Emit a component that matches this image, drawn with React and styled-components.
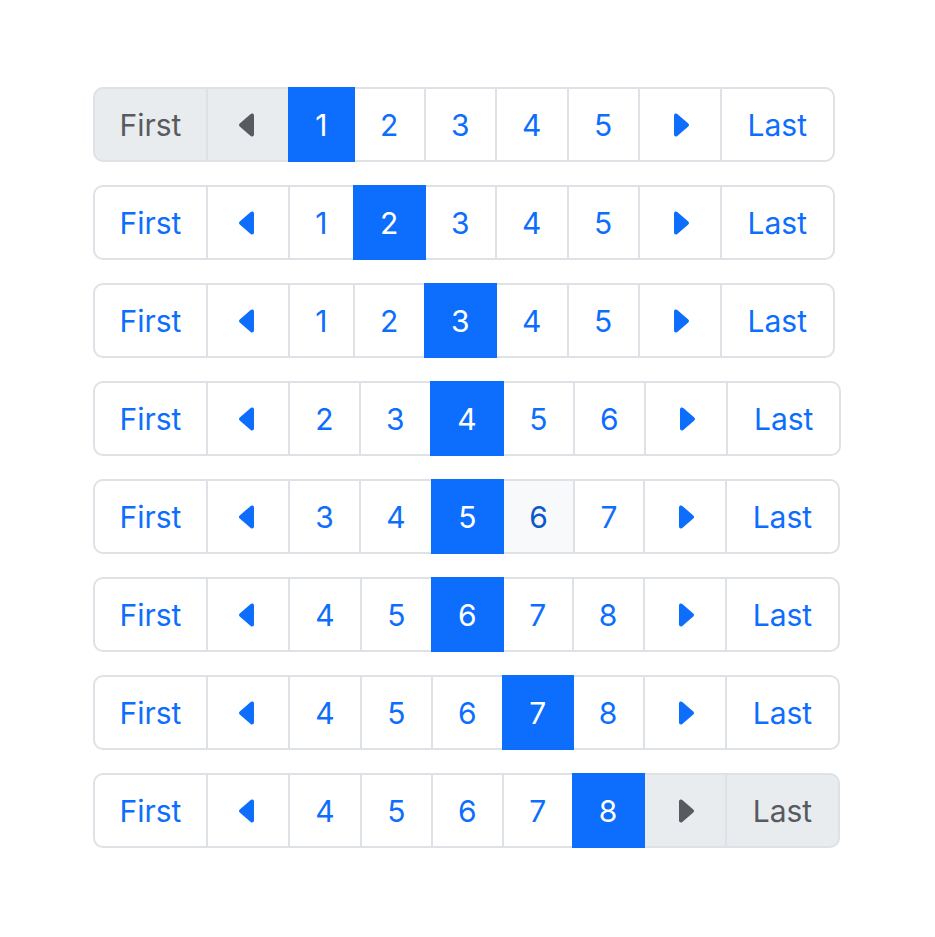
import styled, { createGlobalStyle } from "styled-components";

const GlobalStyle = createGlobalStyle`
  html, body {
    margin: 0;
    padding: 0;
    background: #ffffff;
  }
  body {
    font-family: Inter, "Liberation Sans", sans-serif;
  }
`;

const Page = styled.div`
  padding: 87px 0 0 93px;
  display: flex;
  flex-direction: column;
  align-items: flex-start;
  gap: 23px;
`;

const Pager = styled.ul`
  display: flex;
  list-style: none;
  margin: 0;
  padding: 0;
`;

const Item = styled.li`
  display: flex;
  align-items: center;
  justify-content: center;
  box-sizing: border-box;
  height: 75px;
  padding: 0 ${(p) => p.$pad || 25.3}px;
  margin-left: -2px;
  border: 2px solid #dee2e6;
  font-size: 30px;
  line-height: 1;
  color: #0d6efd;
  background: #ffffff;
  position: relative;

  &:first-child {
    margin-left: 0;
    border-radius: 10px 0 0 10px;
  }
  &:last-child {
    border-radius: 0 10px 10px 0;
  }

  ${(p) =>
    p.$active &&
    `
    background: #0d6efd;
    border-color: #0d6efd;
    color: #ffffff;
    z-index: 2;
  `}
  ${(p) =>
    p.$disabled &&
    `
    background: #e9ecef;
    color: #575b60;
  `}
  ${(p) =>
    p.$hover &&
    `
    background: #f8f9fa;
    color: #0a58ca;
  `}
`;

const Caret = ({ dir }) => (
  <svg width="32" height="32" viewBox="0 0 16 16" fill="currentColor">
    {dir === "left" ? (
      <path d="m3.86 8.753 5.482 4.796c.646.566 1.658.106 1.658-.753V3.204a1 1 0 0 0-1.659-.753l-5.48 4.796a1 1 0 0 0 0 1.506z" />
    ) : (
      <path d="m12.14 8.753-5.482 4.796c-.646.566-1.658.106-1.658-.753V3.204a1 1 0 0 1 1.659-.753l5.48 4.796a1 1 0 0 1 0 1.506z" />
    )}
  </svg>
);

const rows = [
  { pages: [1, 2, 3, 4, 5], current: 1 },
  { pages: [1, 2, 3, 4, 5], current: 2 },
  { pages: [1, 2, 3, 4, 5], current: 3 },
  { pages: [2, 3, 4, 5, 6], current: 4 },
  { pages: [3, 4, 5, 6, 7], current: 5, hover: 6 },
  { pages: [4, 5, 6, 7, 8], current: 6 },
  { pages: [4, 5, 6, 7, 8], current: 7 },
  { pages: [4, 5, 6, 7, 8], current: 8 },
];

const LAST = 8;

const Pagination = ({ pages, current, hover }) => {
  const atStart = current === 1;
  const atEnd = current === LAST;
  return (
    <Pager>
      <Item $pad={24.5} $disabled={atStart}>First</Item>
      <Item $pad={24} $disabled={atStart}>
        <Caret dir="left" />
      </Item>
      {pages.map((n) => (
        <Item key={n} $active={n === current} $hover={n === hover}>
          {n}
        </Item>
      ))}
      <Item $pad={24} $disabled={atEnd}>
        <Caret dir="right" />
      </Item>
      <Item $pad={26} $disabled={atEnd}>Last</Item>
    </Pager>
  );
};

export default function App() {
  return (
    <>
      <GlobalStyle />
      <Page>
        {rows.map((r, i) => (
          <Pagination key={i} {...r} />
        ))}
      </Page>
    </>
  );
}
